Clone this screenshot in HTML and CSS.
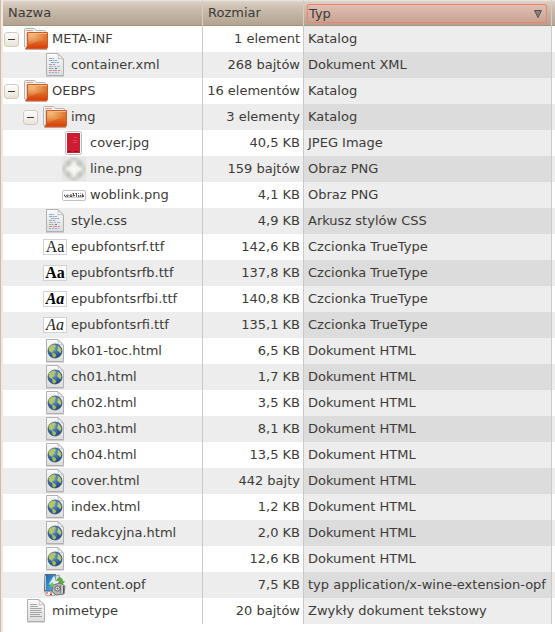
FILE: index.html
```html
<!DOCTYPE html>
<html lang="pl">
<head>
<meta charset="utf-8">
<title>Pliki</title>
<link rel="stylesheet" href="styles.css">
</head>
<body>
<svg class="defs" aria-hidden="true">
  <defs>
    <linearGradient id="gFolder" x1="0" y1="0" x2="0" y2="1"><stop offset="0" stop-color="#dc7a30"/><stop offset=".5" stop-color="#dd6f28"/><stop offset="1" stop-color="#d83c08"/></linearGradient>
    <radialGradient id="gShine" cx=".2" cy=".2" r=".8"><stop offset="0" stop-color="#ffe0a8" stop-opacity=".65"/><stop offset="1" stop-color="#ffe0a8" stop-opacity="0"/></radialGradient>
    <linearGradient id="gPage" x1="0" y1="0" x2="0" y2="1"><stop offset="0" stop-color="#fafafa"/><stop offset="1" stop-color="#dcdcdc"/></linearGradient>
    <radialGradient id="gGlobe" cx=".4" cy=".3" r=".75"><stop offset="0" stop-color="#7ba6d8"/><stop offset=".5" stop-color="#3c6cab"/><stop offset="1" stop-color="#1b4172"/></radialGradient>
    <radialGradient id="gStar"><stop offset="0" stop-color="#fff"/><stop offset=".45" stop-color="#f2f2f0"/><stop offset="1" stop-color="#f2f2f0" stop-opacity="0"/></radialGradient>
    <linearGradient id="gWine" x1="0" y1="0" x2="1" y2="1"><stop offset="0" stop-color="#1460a8"/><stop offset="1" stop-color="#58b8ee"/></linearGradient>
    <filter id="fBlur"><feGaussianBlur stdDeviation="1.2"/></filter>
    <clipPath id="cSquare"><rect width="24" height="24"/></clipPath>
  </defs>
  <symbol id="folder" viewBox="0 0 24 24">
    <path d="M.5 20V2.500Q.5 1.500 1.500 1.500H10.500L12.500 3.500H20.500Q21.500 3.500 21.500 4.500V20Z" fill="#f2f2f2" stroke="#b4b4b4"/>
    <path d="M2 3.500H9" stroke="#f09a72"/>
    <path d="M2.500 5V20" stroke="#d4d4d4"/>
    <path d="M3.500 5.500H23.500V20.500Q23.500 21.500 22.500 21.500H1.500Q2.500 21 3.500 19Z" fill="url(#gFolder)" stroke="#cf5a24"/>
    <path d="M4 6H23V13Q13 13 4 19Z" fill="url(#gShine)"/>
    <path d="M4 6.500H23" stroke="#f4b988"/>
    <path d="M1.500 22.500H23" stroke="#9a3020" opacity=".45"/>
  </symbol>
  <symbol id="page" viewBox="0 0 24 24">
    <path d="M3.500 .5H15L20.500 6V22.500H3.500Z" fill="url(#gPage)" stroke="#b0b0b0"/>
    <path d="M4.500 1.500H15" stroke="#fff"/>
    <path d="M14.500 .5Q16 3 15 6Q18 4.500 20.500 6.500Z" fill="#fff" stroke="#b8b8b8" stroke-width=".8"/>
    <path d="M3 23.500H21" stroke="#999" opacity=".35"/>
  </symbol>
  <symbol id="code" viewBox="0 0 24 24">
    <use href="#page"/>
    <path d="M6 5.500H11M6 7.500H14M8 9.500H16" stroke="#86a9cc" stroke-dasharray="3 .5 2 .5"/>
    <path d="M6 11.500H12M6 17.500H17" stroke="#d884b0" stroke-dasharray="3 1 4 1"/>
    <path d="M6 13.500H17" stroke="#92c0cf" stroke-dasharray="4 1 2 1"/>
    <path d="M6 15.500H11" stroke="#7cbb74" stroke-dasharray="2 .5"/>
    <path d="M12 15.500H14" stroke="#777"/>
    <path d="M6 19.500H16" stroke="#90b2d2" stroke-dasharray="2 1"/>
  </symbol>
  <symbol id="text" viewBox="0 0 24 24">
    <use href="#page"/>
    <path d="M6 5.500H13M6 7.500H14M6 9.500H18M6 11.500H17M6 13.500H18M6 15.500H16M6 17.500H18" stroke="#a6a6a6"/>
  </symbol>
  <symbol id="html" viewBox="0 0 24 24">
    <use href="#page"/>
    <circle cx="12" cy="12" r="7" fill="url(#gGlobe)" stroke="#2b5184" stroke-width=".8"/>
    <path d="M5.600 9Q8 5.500 12 5.600L13 7.500L11 9L12 10.500L10 12L9 14L6 12Z" fill="#b2c763"/>
    <path d="M14.300 6.500L17 8.300L18.500 11.500L17.300 14.500L15.500 12.500L14 11L15 9Z" fill="#b8cb66"/>
    <path d="M9 13.500L12 14.500L13.300 16.500L11.500 18.700L9.500 17.500Z" fill="#a4bc55"/>
  </symbol>
  <symbol id="cover" viewBox="0 0 24 24">
    <rect x="3.500" y=".5" width="16" height="23" rx="2" fill="#fff" stroke="#bcbcbc"/>
    <rect x="5" y="2" width="13" height="20" fill="#cf1c33"/>
    <path d="M12 6.500H15M11 9.500H15.500M11 11.500H15" stroke="#e05a6a" stroke-width=".6"/>
    <path d="M6 20.500H9M12 20.500H16" stroke="#8c1020"/>
  </symbol>
  <symbol id="line" viewBox="0 0 24 24">
    <g clip-path="url(#cSquare)">
      <rect width="24" height="24" fill="#e6e6e4"/>
      <g filter="url(#fBlur)">
        <path d="M1 8L8 1H16L23 8V16L16 23H8L1 16Z" fill="#d1d3cd"/>
        <path d="M4 4H8V8H4ZM16 4H20V8H16ZM4 16H8V20H4ZM16 16H20V20H16Z" fill="#c0c3bb"/>
        <path d="M12 3L15 9L21 12L15 15L12 21L9 15L3 12L9 9Z" fill="#f6f6f5"/>
        <path d="M10 0H14V3H10ZM10 21H14V24H10ZM0 10H3V14H0ZM21 10H24V14H21Z" fill="#c9ccc4"/>
      </g>
      <circle cx="12" cy="12" r="5" fill="url(#gStar)"/>
    </g>
  </symbol>
  <symbol id="woblink" viewBox="0 0 24 24">
    <rect x=".5" y="7.500" width="23" height="10" rx="1.500" fill="#fff" stroke="#c2c2c2"/>
    <path d="M2.500 11.500V13L4 13.500L5 12V13.500H6V11.500M8 12V13.500H10V12ZM11.500 10V13.500M11.500 12.500H13M14.500 10V14M16.500 12V14M18 14V12.500H19V14M20.500 10.500V14M22 12L21 13L22 14" fill="none" stroke="#444" stroke-width=".9"/>
    <path d="M10 10.500H11" stroke="#d96"/><path d="M13 10.500H14" stroke="#7a5"/><path d="M16 10.500H17" stroke="#38a"/><path d="M18 10.500H19" stroke="#da4"/>
    <path d="M3 14.500H21" stroke="#999" opacity=".5"/>
  </symbol>
  <symbol id="opf" viewBox="0 0 24 24">
    <path d="M2 1.500H12.500V18H1.500Z" fill="url(#gWine)" stroke="#555" stroke-width=".8"/>
    <path d="M2.500 2.500V17" stroke="#bcd"/>
    <path d="M11 2.500L6 11L11 15L14 9Z" fill="#d9effc"/>
    <path d="M12 3L16 2L17 6L13 8Z" fill="#ccdeea" stroke="#777" stroke-width=".6"/>
    <path d="M14 7L16 4.500Q20 5 19.500 9L21.500 8.500L18.500 12L15.500 9H17Q17 7.500 14 7Z" fill="#59b82c" stroke="#28751a" stroke-width=".5"/>
    <path d="M10 12L17 10L22 13L21 21L13 22L9 18Z" fill="#b4b8b6" stroke="#5a605e" stroke-width=".8"/>
    <circle cx="14.500" cy="15.500" r="2.600" fill="#eee" stroke="#555b58"/>
    <circle cx="14.500" cy="15.500" r="1" fill="#555"/>
    <path d="M18 12V20M20.500 13V20" stroke="#555"/><path d="M19 12V20" stroke="#eee"/>
    <path d="M7 11L10 9V13L8 15Z" fill="#6ec742"/>
    <path d="M1.500 18.500H9L12 22.500H3Z" fill="#f6f6f6" stroke="#9a9a9a" stroke-width=".8"/>
    <path d="M3 20H5M7 20H9M7 21.500H9" stroke="#d8202c" stroke-width="1.200"/>
  </symbol>
</svg>

<main class="files">
<table class="list">
  <colgroup><col class="c-name"><col class="c-size"><col class="c-type"><col class="c-end"></colgroup>
  <thead>
    <tr>
      <th scope="col"><button class="head" type="button">Nazwa</button></th>
      <th scope="col"><button class="head" type="button">Rozmiar</button></th>
      <th scope="col" aria-sort="ascending"><button class="head sorted" type="button">Typ<svg class="arrow" viewBox="0 0 8 8" aria-hidden="true"><path d="M.5 .5H7.500L4 7.500Z" fill="#8d807a" stroke="#59524e"/></svg></button></th>
      <td></td>
    </tr>
  </thead>
  <tbody>
    <tr><td><div class="entry"><button class="toggle" type="button" aria-label="META-INF"></button><svg class="icon"><use href="#folder"/></svg><span>META-INF</span></div></td><td>1 element</td><td>Katalog</td><td></td></tr>
    <tr><td><div class="entry l1"><svg class="icon"><use href="#code"/></svg><span>container.xml</span></div></td><td>268 bajtów</td><td>Dokument XML</td><td></td></tr>
    <tr><td><div class="entry"><button class="toggle" type="button" aria-label="OEBPS"></button><svg class="icon"><use href="#folder"/></svg><span>OEBPS</span></div></td><td>16 elementów</td><td>Katalog</td><td></td></tr>
    <tr><td><div class="entry l1"><button class="toggle" type="button" aria-label="img"></button><svg class="icon"><use href="#folder"/></svg><span>img</span></div></td><td>3 elementy</td><td>Katalog</td><td></td></tr>
    <tr><td><div class="entry l2"><svg class="icon"><use href="#cover"/></svg><span>cover.jpg</span></div></td><td>40,5 KB</td><td>JPEG Image</td><td></td></tr>
    <tr><td><div class="entry l2"><svg class="icon"><use href="#line"/></svg><span>line.png</span></div></td><td>159 bajtów</td><td>Obraz PNG</td><td></td></tr>
    <tr><td><div class="entry l2"><svg class="icon"><use href="#woblink"/></svg><span>woblink.png</span></div></td><td>4,1 KB</td><td>Obraz PNG</td><td></td></tr>
    <tr><td><div class="entry l1"><svg class="icon"><use href="#code"/></svg><span>style.css</span></div></td><td>4,9 KB</td><td>Arkusz stylów CSS</td><td></td></tr>
    <tr><td><div class="entry l1"><span class="font">Aa</span><span>epubfontsrf.ttf</span></div></td><td>142,6 KB</td><td>Czcionka TrueType</td><td></td></tr>
    <tr><td><div class="entry l1"><span class="font bold">Aa</span><span>epubfontsrfb.ttf</span></div></td><td>137,8 KB</td><td>Czcionka TrueType</td><td></td></tr>
    <tr><td><div class="entry l1"><span class="font bold italic">Aa</span><span>epubfontsrfbi.ttf</span></div></td><td>140,8 KB</td><td>Czcionka TrueType</td><td></td></tr>
    <tr><td><div class="entry l1"><span class="font italic">Aa</span><span>epubfontsrfi.ttf</span></div></td><td>135,1 KB</td><td>Czcionka TrueType</td><td></td></tr>
    <tr><td><div class="entry l1"><svg class="icon"><use href="#html"/></svg><span>bk01-toc.html</span></div></td><td>6,5 KB</td><td>Dokument HTML</td><td></td></tr>
    <tr><td><div class="entry l1"><svg class="icon"><use href="#html"/></svg><span>ch01.html</span></div></td><td>1,7 KB</td><td>Dokument HTML</td><td></td></tr>
    <tr><td><div class="entry l1"><svg class="icon"><use href="#html"/></svg><span>ch02.html</span></div></td><td>3,5 KB</td><td>Dokument HTML</td><td></td></tr>
    <tr><td><div class="entry l1"><svg class="icon"><use href="#html"/></svg><span>ch03.html</span></div></td><td>8,1 KB</td><td>Dokument HTML</td><td></td></tr>
    <tr><td><div class="entry l1"><svg class="icon"><use href="#html"/></svg><span>ch04.html</span></div></td><td>13,5 KB</td><td>Dokument HTML</td><td></td></tr>
    <tr><td><div class="entry l1"><svg class="icon"><use href="#html"/></svg><span>cover.html</span></div></td><td>442 bajty</td><td>Dokument HTML</td><td></td></tr>
    <tr><td><div class="entry l1"><svg class="icon"><use href="#html"/></svg><span>index.html</span></div></td><td>1,2 KB</td><td>Dokument HTML</td><td></td></tr>
    <tr><td><div class="entry l1"><svg class="icon"><use href="#html"/></svg><span>redakcyjna.html</span></div></td><td>2,0 KB</td><td>Dokument HTML</td><td></td></tr>
    <tr><td><div class="entry l1"><svg class="icon"><use href="#html"/></svg><span>toc.ncx</span></div></td><td>12,6 KB</td><td>Dokument HTML</td><td></td></tr>
    <tr><td><div class="entry l1"><svg class="icon"><use href="#opf"/></svg><span>content.opf</span></div></td><td>7,5 KB</td><td>typ application/x-wine-extension-opf</td><td></td></tr>
    <tr><td><div class="entry"><svg class="icon"><use href="#text"/></svg><span>mimetype</span></div></td><td>20 bajtów</td><td>Zwykły dokument tekstowy</td><td></td></tr>
  </tbody>
</table>
</main>
</body>
</html>
```
FILE: styles.css
```css
* { box-sizing: border-box; }

body {
  margin: 0;
  background: #fff;
  color: #3c3b37;
  font: 13px/24px "DejaVu Sans", sans-serif;
}

.defs { position: absolute; width: 0; height: 0; }

.files {
  min-height: 100vh;
  border-left: 1px solid #d0bca6;
  padding-left: 2px;
  background: linear-gradient(to right, #f1e8e0 2px, #fff 2px);
}

.list {
  width: 100%;
  table-layout: fixed;
  border-collapse: separate;
  border-spacing: 0;
}

.c-name { width: 200px; }
.c-size { width: 101px; }
.c-end { width: 3px; }

thead tr {
  height: 26px;
  background: linear-gradient(#f0e9e1 0, #d9cfc4 2px, #cbbfb1 8px, #b3a390 25px, #a39482 25px);
}

th, td { padding: 0; border-right: 1px solid #c9c9c9; }
th:last-child, td:last-child { border-right: 0; }
thead th { border-right-color: #d8cdbf; vertical-align: top; }

button { margin: 0; border: 0; padding: 0; font: inherit; color: inherit; }

.head {
  display: flex;
  align-items: center;
  justify-content: space-between;
  width: 100%;
  height: 26px;
  padding: 0 5px;
  background: none;
  font-weight: normal;
  line-height: 24px;
}

.head.sorted {
  width: calc(100% - 7px);
  height: 19px;
  margin: 4px 4px 0 3px;
  padding: 0 4px 0 1px;
  border: 1px solid #f4806a;
  border-radius: 2px;
  background: linear-gradient(#dfbfb3, #c9a394) padding-box;
  line-height: 17px;
}

.arrow { width: 8px; height: 8px; }

tbody tr { height: 26px; }
tbody td { padding: 0 3px 0 4px; white-space: nowrap; }
tbody td:first-child { padding: 0; }
tbody td:nth-child(2) { text-align: right; }
tbody td:nth-child(3) { background: #ededed; }
tbody tr:nth-child(even) { background: #ededed; }
tbody tr:nth-child(even) td:nth-child(3) { background: #dcdcdc; }

.entry {
  display: flex;
  align-items: center;
  justify-content: flex-start;
  height: 26px;
  padding-left: 21px;
}
.entry.l1 { padding-left: 40px; }
.entry.l2 { padding-left: 59px; }

.toggle {
  display: grid;
  place-items: center;
  width: 15px;
  height: 15px;
  margin: 0 5px 0 -20px;
  border: 1px solid #d5cabb;
  border-radius: 3px;
  background: linear-gradient(#fff, #e9e2d9);
}
.toggle::before { content: ""; width: 7px; height: 1px; background: #3c3b37; }

.icon { flex: none; width: 24px; height: 24px; margin-right: 4px; }

.font {
  flex: none;
  width: 24px;
  height: 16px;
  margin-right: 4px;
  border: 1px solid #d2d2d2;
  background: #fff;
  color: #222;
  font: 16px/14px "Liberation Serif", serif;
  text-align: center;
}
.bold { font-weight: bold; color: #000; }
.italic { font-style: italic; }
```
